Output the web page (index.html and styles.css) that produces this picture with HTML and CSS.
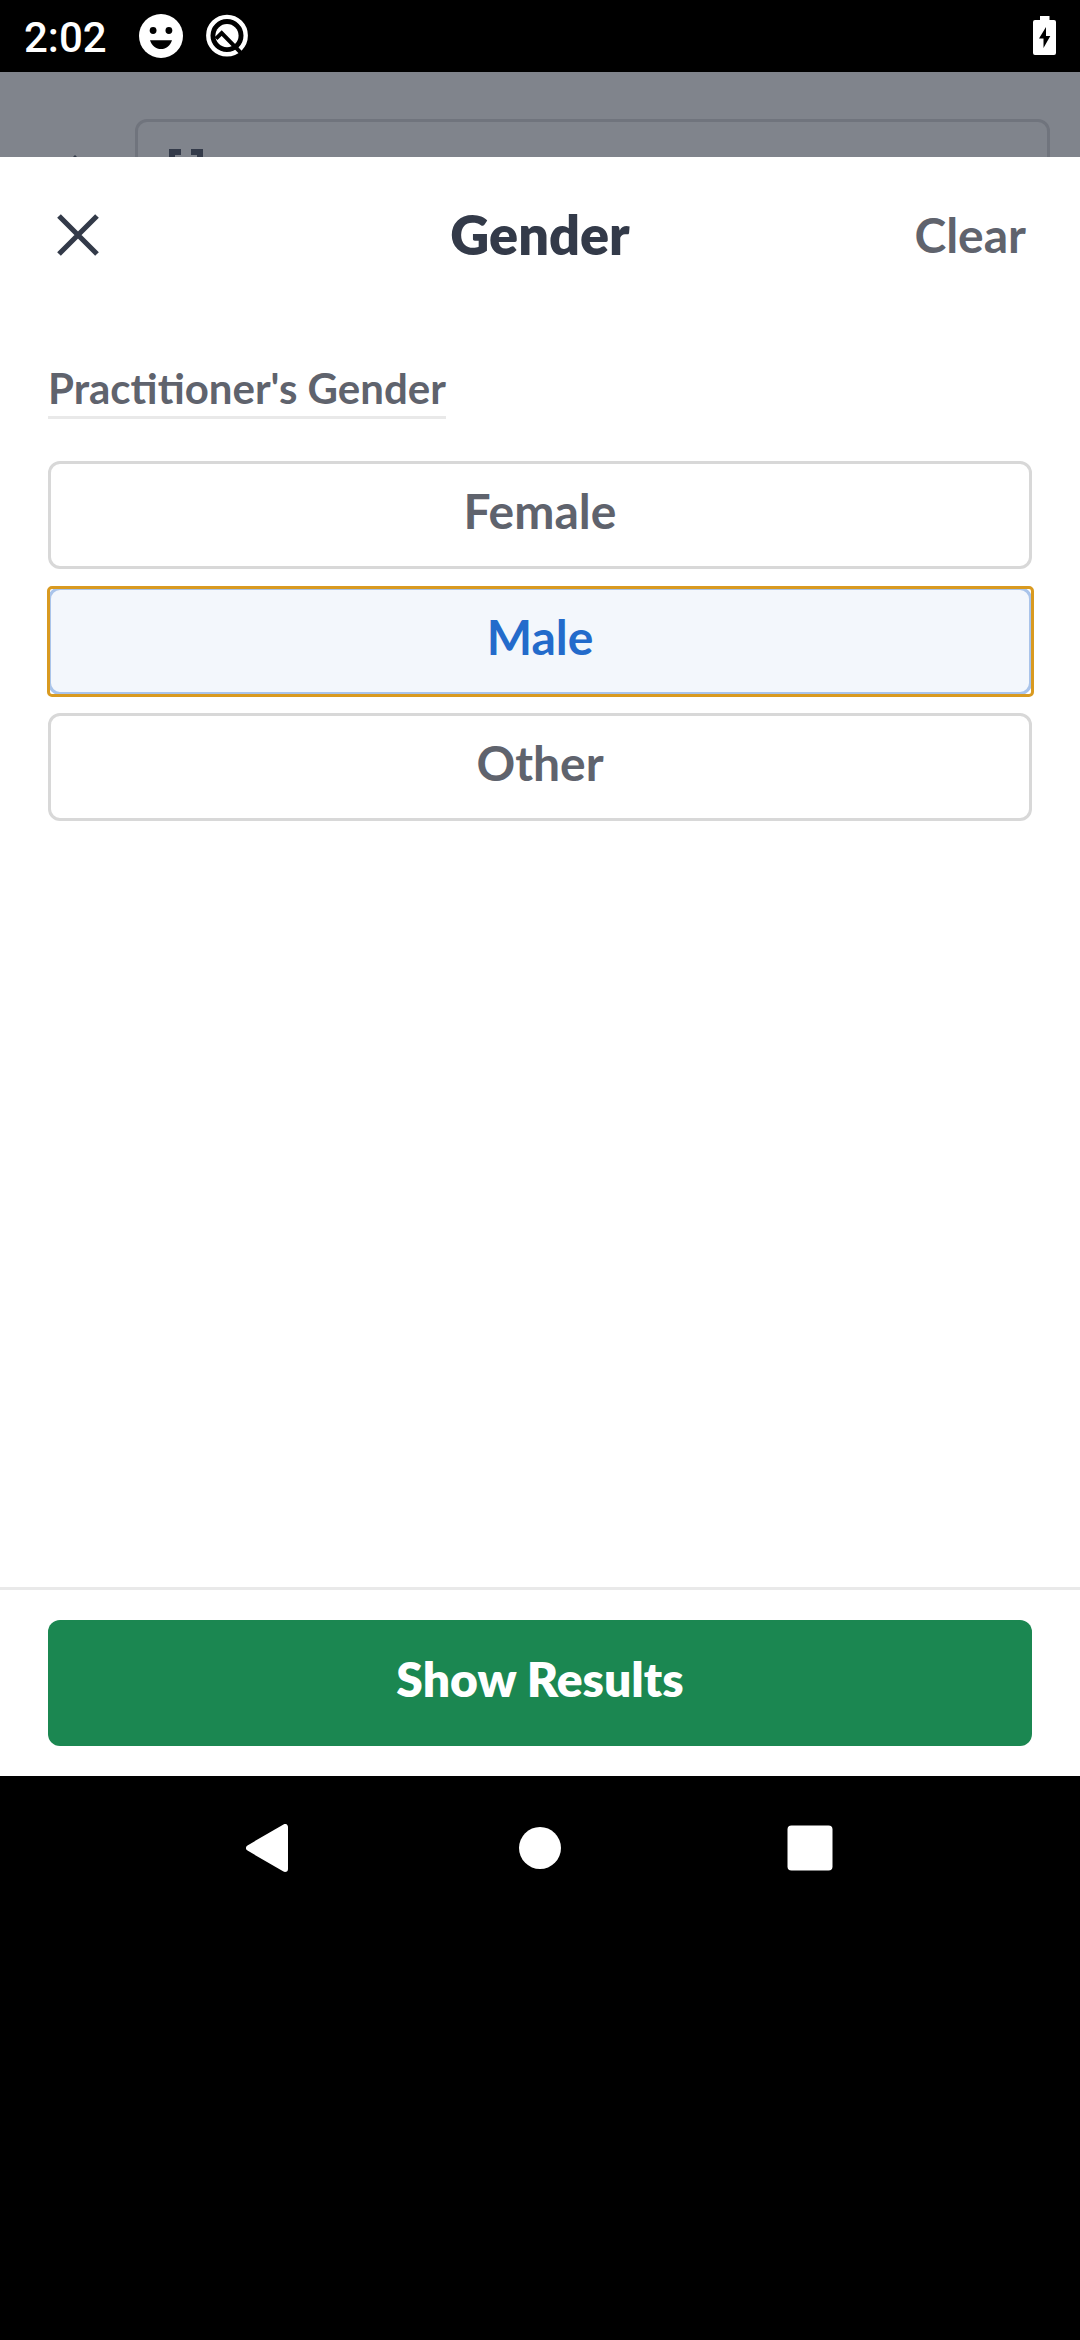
FILE: index.html
```html
<!DOCTYPE html>
<html lang="en">
<head>
<meta charset="utf-8">
<title>Gender</title>
<link rel="stylesheet" href="styles.css">
</head>
<body>
<div class="status">
  <span class="time">2:02</span>
  <svg class="smiley" viewBox="0 0 44 44"><circle cx="22" cy="22" r="22" fill="#fff"/><circle cx="14.1" cy="16.5" r="3.4"/><circle cx="29.9" cy="16.5" r="3.4"/><path d="M11 26.2H33C31.2 31.6 27 35 22 35S12.800 31.600 11 26.200Z"/></svg>
  <svg class="badge" viewBox="0 0 44 44"><circle cx="22" cy="21.600" r="18.700" fill="none" stroke="#fff" stroke-width="4.400"/><circle cx="22" cy="21.600" r="11.600" fill="#fff"/><path d="M11 24.700 16.700 19 36 38.800" fill="none" stroke="#000" stroke-width="4"/></svg>
  <svg class="battery" viewBox="0 0 23 39"><path fill="#fff" d="M7 0H16.500V4H21Q23 4 23 6V37Q23 39 21 39H2Q0 39 0 37V6Q0 4 2 4H7Z"/><path d="M13 11 6 22.500H10.500V32L17.300 20H13Z"/></svg>
</div>
<div class="backdrop">
  <svg class="back-arrow" viewBox="0 0 8 4"><path d="M0 4 4 0 8 4Z" fill="#333a49"/></svg>
  <div class="field"><svg class="scan" viewBox="0 0 34 34"><path d="M3 12V3H12M22 3H31V12" fill="none" stroke="#333a49" stroke-width="6"/></svg></div>
</div>
<main class="sheet">
  <header class="header">
    <svg class="close" viewBox="0 0 42 42"><path d="M2 2 40 40M40 2 2 40" stroke="#333a49" stroke-width="5.200"/></svg>
    <h1 class="title">Gender</h1>
    <span class="clear">Clear</span>
  </header>
  <section class="content">
    <h2 class="label">Practitioner's Gender</h2>
    <div class="options">
      <div class="option">Female</div>
      <div class="option selected">Male</div>
      <div class="option">Other</div>
    </div>
  </section>
  <footer class="footer"><div class="submit">Show Results</div></footer>
</main>
<nav class="nav">
  <svg class="nav-icon" viewBox="0 0 48 48"><path d="M3 24 39 3V45Z" fill="#fff" stroke="#fff" stroke-width="6" stroke-linejoin="round"/></svg>
  <svg class="nav-icon" viewBox="0 0 48 48"><circle cx="24" cy="24" r="21" fill="#fff"/></svg>
  <svg class="nav-icon" viewBox="0 0 48 48"><rect x="1.500" y="1.500" width="45" height="45" rx="4" fill="#fff"/></svg>
</nav>
</body>
</html>
```

FILE: styles.css
```css
* { box-sizing: border-box; }
body { margin: 0; width: 1080px; height: 2340px; overflow: hidden; background: #000; font-family: Lato, sans-serif; display: flex; flex-direction: column; }
svg { display: block; flex: none; }
.status { height: 72px; display: flex; align-items: flex-start; padding: 0 24px; color: #fff; }
.time { width: 115px; font: 500 42px/50px Roboto, sans-serif; padding-top: 13px; }
.smiley { width: 44px; height: 44px; margin-top: 14px; }
.badge { width: 44px; height: 44px; margin: 14px 0 0 22px; }
.battery { width: 23px; height: 39px; margin: 16px 0 0 auto; }
.backdrop { height: 85px; background: #80848c; overflow: hidden; display: flex; align-items: flex-start; padding: 47px 30px 0 71px; }
.back-arrow { width: 8px; height: 4px; margin-top: 36px; }
.field { margin-left: 56px; flex: 1; height: 120px; border: 3px solid #70747d; border-radius: 12px; padding: 27px 31px; }
.scan { width: 34px; height: 34px; }
.sheet { height: 1619px; background: #fff; display: flex; flex-direction: column; }
.header { height: 155px; display: grid; grid-template-columns: 1fr auto 1fr; align-items: center; padding: 0 54px; color: #333a49; }
.close { width: 42px; height: 42px; margin-left: 3px; }
.title { margin: 0; font-size: 54px; line-height: 65px; font-weight: 800; }
.clear { justify-self: end; font-size: 48px; line-height: 58px; font-weight: 700; color: #5f636d; }
.content { flex: 1; padding: 51px 48px 0; display: flex; flex-direction: column; align-items: flex-start; }
.label { margin: 0 0 42px; padding-bottom: 2px; border-bottom: 3px solid #e9e9e9; font-size: 42px; line-height: 51px; font-weight: 700; color: #5f636d; }
.options { width: 100%; display: flex; flex-direction: column; gap: 18px; }
.option { height: 108px; border: 3px solid #d8d8d8; border-radius: 12px; padding-bottom: 9px; display: flex; align-items: center; justify-content: center; font-size: 48px; line-height: 58px; font-weight: 700; color: #5f636d; position: relative; }
.selected { color: #236bcb; background: #f3f7fc; border-color: #a9c4ea; }
.selected::after { content: ""; position: absolute; inset: -4.500px; border: 3px solid #d99a20; border-radius: 5px; }
.footer { border-top: 3px solid #e9e9e9; padding: 30px 48px; }
.submit { height: 126px; padding-bottom: 9px; border-radius: 12px; background: #1b8751; color: #fff; display: flex; align-items: center; justify-content: center; font-size: 48px; line-height: 58px; font-weight: 800; }
.nav { height: 144px; display: flex; align-items: center; justify-content: center; gap: 222px; }
.nav-icon { width: 48px; height: 48px; }
```
